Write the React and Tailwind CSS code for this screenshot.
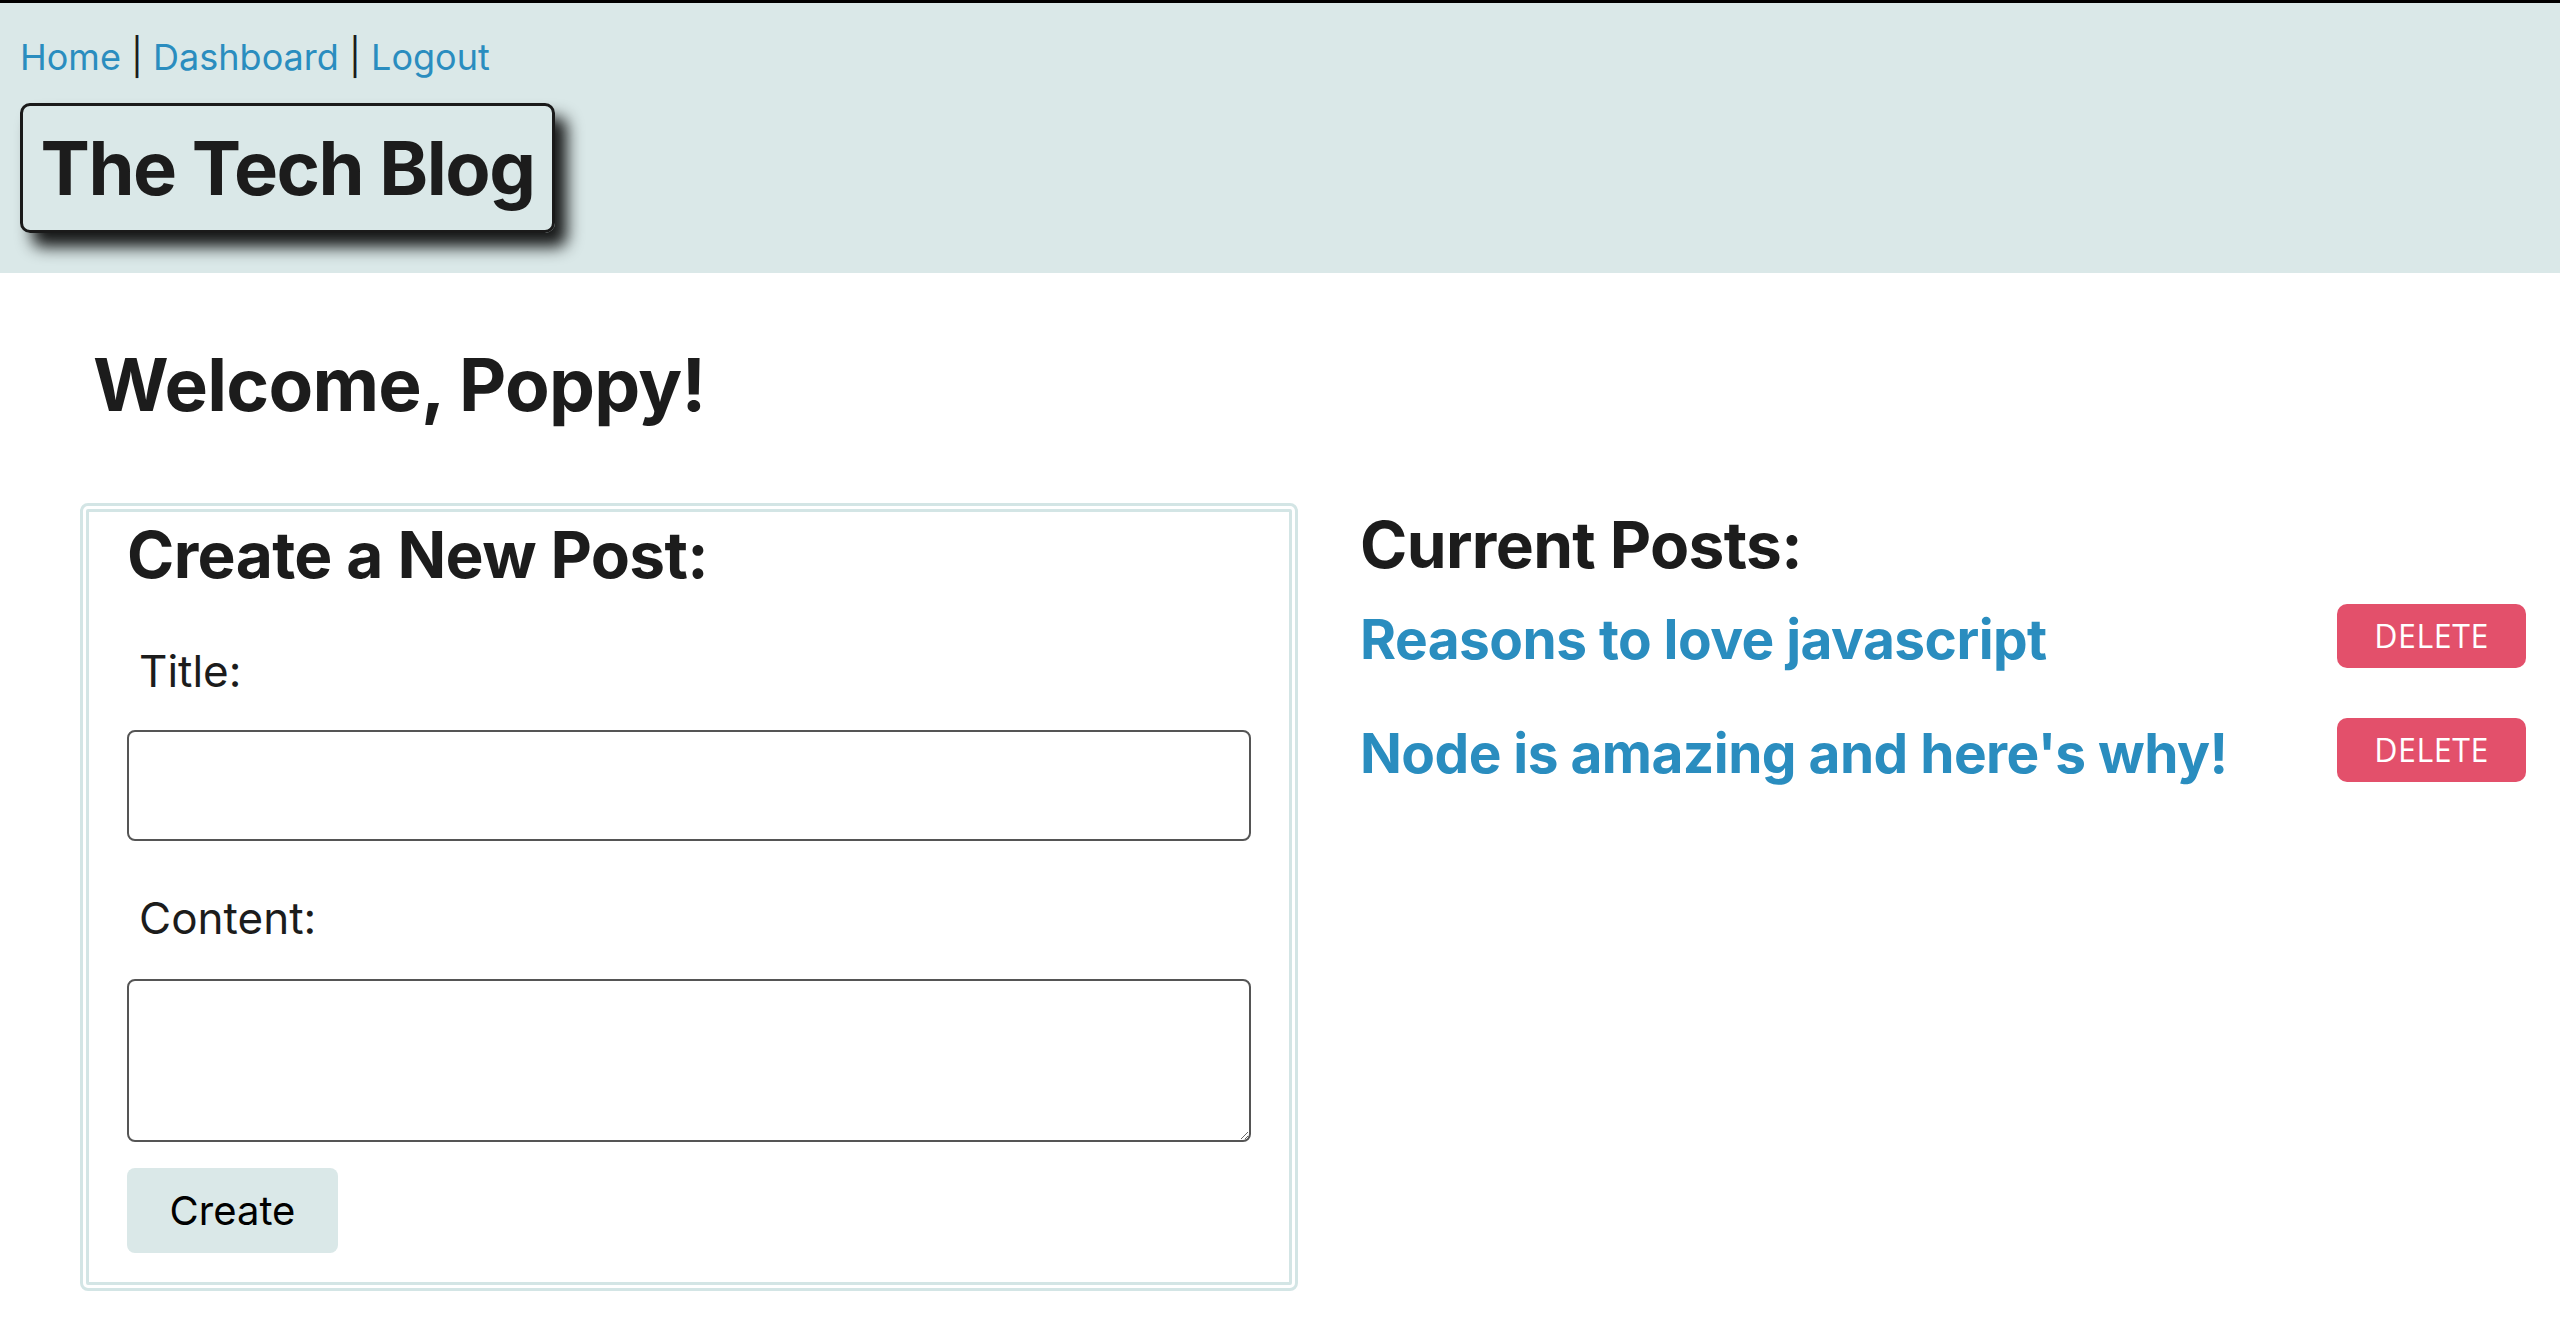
import React from "react";

const font = { fontFamily: "Inter, 'Liberation Sans', sans-serif" };

const Header = () => {
  return (
    <header className="bg-[#dae8e8] border-t-[3px] border-black h-[273px] px-[20px] pt-[31px]">
      <nav className="text-[36px] leading-[46px] text-[#1c1c1c]">
        <a href="#" className="text-[#2a8dbf]">Home</a>
        <span> | </span>
        <a href="#" className="text-[#2a8dbf]">Dashboard</a>
        <span> | </span>
        <a href="#" className="text-[#2a8dbf]">Logout</a>
      </nav>
      <div className="mt-[23px] w-[535px] h-[130px] border-[3px] border-[#1a1a1a] rounded-[10px] flex items-center justify-center shadow-[12px_14px_16px_rgba(0,0,0,0.9)]">
        <h1 className="text-[74px] font-bold text-[#1c1c1c] tracking-[-0.02em] leading-none">
          The Tech Blog
        </h1>
      </div>
    </header>
  );
};

const PostRow = ({ title }) => {
  return (
    <div className="flex items-center justify-between h-[114px]">
      <a href="#" className="pt-[6px] text-[55px] font-bold text-[#2a8dbf] tracking-[-0.01em] leading-none">
        {title}
      </a>
      <button
        className="w-[189px] h-[64px] bg-[#e3506b] rounded-[10px] text-white text-[32px] tracking-[0.02em]"
        style={{ fontFamily: "'Open Sans', sans-serif" }}
      >
        DELETE
      </button>
    </div>
  );
};

export default function App() {
  return (
    <div style={font} className="bg-white min-h-screen text-[#1c1c1c]">
      <Header />
      <main className="pl-[80px] pr-[34px]">
        <h2 className="text-[73px] font-bold ml-[13px] mt-[75px] leading-none tracking-[-0.01em]">
          Welcome, Poppy!
        </h2>
        <div className="flex gap-[62px] mt-[82px]">
          <form className="w-[1218px] border-[9px] border-double border-[#d3e5e5] rounded-[8px] px-[38px] pt-[11px] pb-[29px]">
            <h3 className="text-[64px] font-bold leading-none tracking-[-0.01em]">
              Create a New Post:
            </h3>
            <label className="block text-[44px] ml-[12px] mt-[62px] leading-none">Title:</label>
            <input
              type="text"
              className="block w-full h-[111px] mt-[37px] border-2 border-[#555] rounded-[8px] px-3 text-[36px]"
            />
            <label className="block text-[44px] ml-[12px] mt-[55px] leading-none">Content:</label>
            <textarea className="block w-full h-[163px] mt-[39px] border-2 border-[#555] rounded-[8px] px-3 text-[36px]" />
            <button
              type="button"
              className="block mt-[26px] w-[211px] h-[85px] bg-[#dae8e8] rounded-[8px] text-[40px] text-black"
            >
              Create
            </button>
          </form>
          <section className="flex-1">
            <h3 className="text-[64px] font-bold leading-none tracking-[-0.01em] mt-[10px]">
              Current Posts:
            </h3>
            <div className="mt-[2px]">
              <PostRow title="Reasons to love javascript" />
              <PostRow title="Node is amazing and here's why!" />
            </div>
          </section>
        </div>
      </main>
    </div>
  );
}
